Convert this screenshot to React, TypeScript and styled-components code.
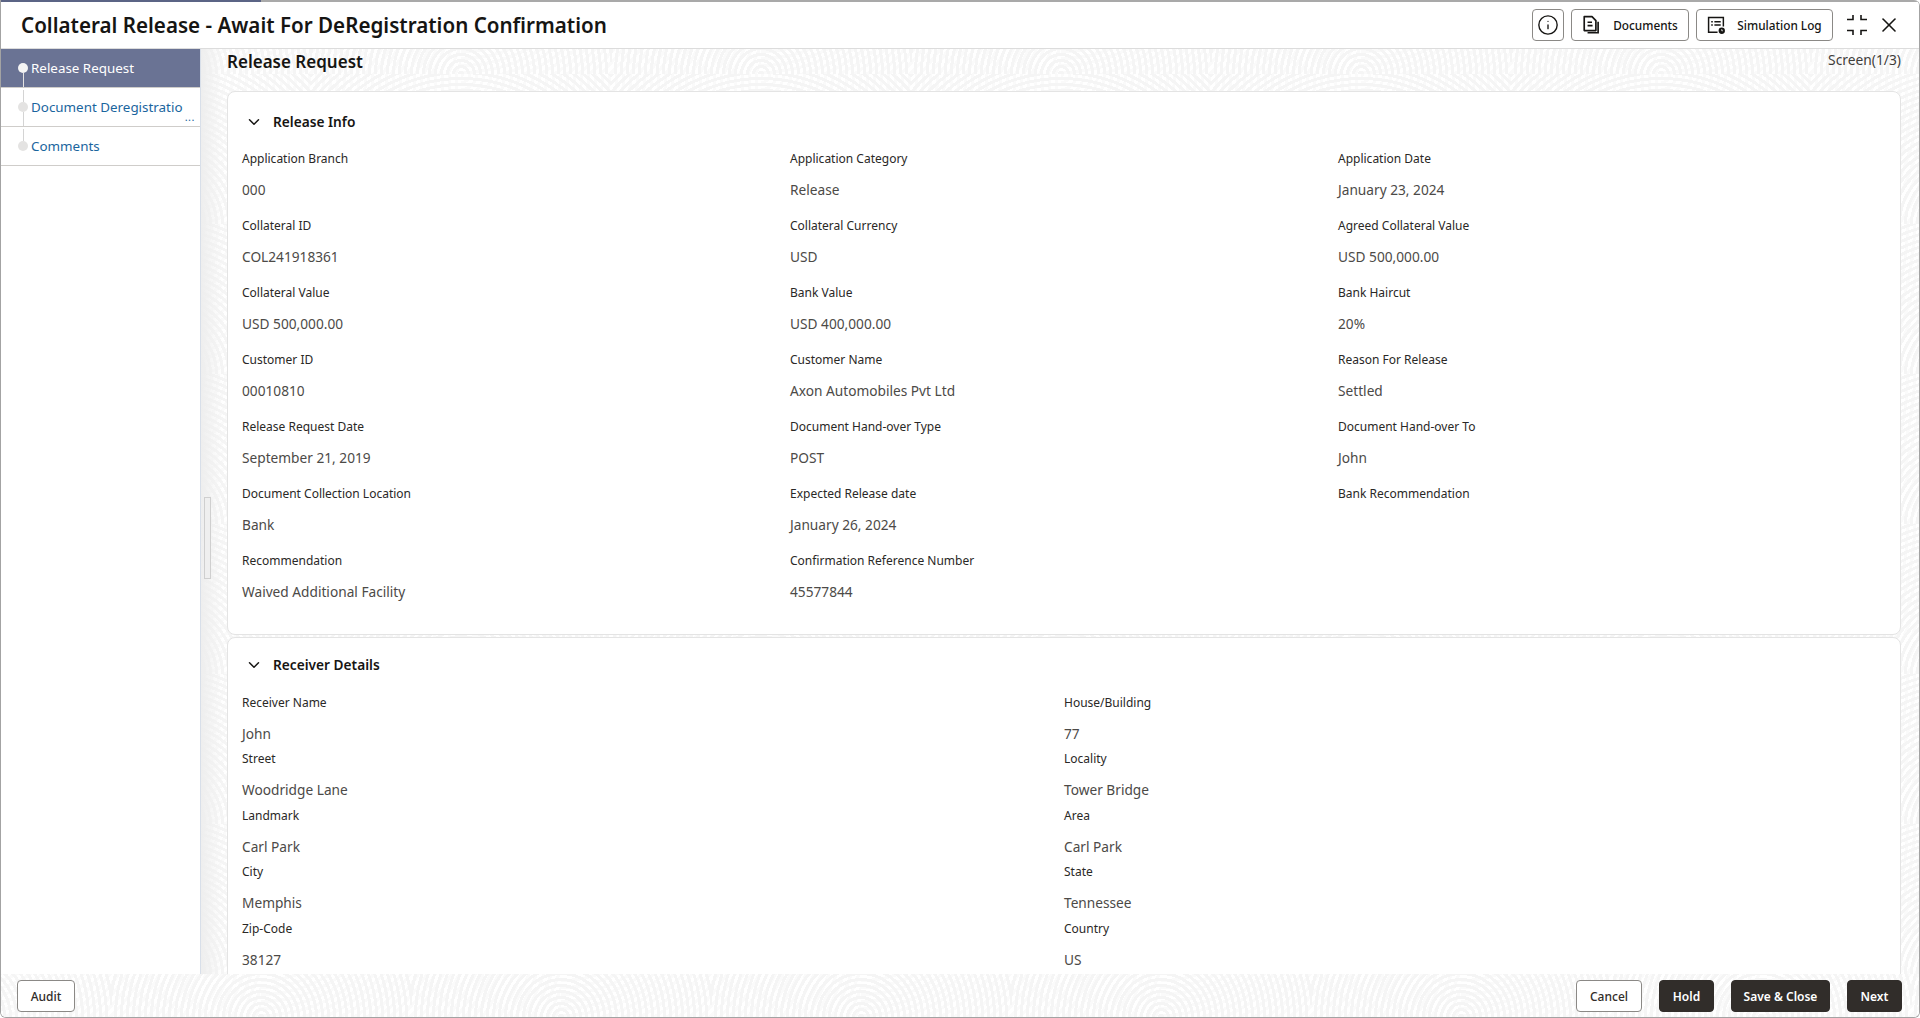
import React from 'react';
import styled, { createGlobalStyle, css } from 'styled-components';
import { Info, X, ChevronDown } from 'lucide-react';

const GlobalStyle = createGlobalStyle`
  html, body { margin: 0; padding: 0; height: 100%; background: #fff; }
  #root { height: 100%; }
  * { box-sizing: border-box; }
  body { font-family: "Noto Sans", "Open Sans", sans-serif; color: #161513; overflow: hidden; }
`;

// concentric arc texture shared by the page body and the footer
const arcs = css`
  background-color: #fff;
  background-image:
    repeating-radial-gradient(circle at 50% 100%, #f5f5f5 0 3px, transparent 3px 6px),
    repeating-radial-gradient(circle at 0% 0%, #fafafa 0 3px, transparent 3px 7px);
  background-size: 300px 150px, 300px 150px;
  background-position: left 110px bottom 0, left 260px bottom 0;
`;

const Window = styled.div`
  height: 1018px;
  width: 1920px;
  display: flex;
  flex-direction: column;
  border: 1px solid #a3a3a3;
  border-top: 0;
  border-radius: 0 6px 6px 6px;
  overflow: hidden;
`;

const ProgressTrack = styled.div`
  height: 2px;
  flex: none;
  background: #a9a9a9;
`;

const ProgressFill = styled.div`
  height: 100%;
  background: #5b6485;
`;

const Header = styled.header`
  height: 47px;
  flex: none;
  display: flex;
  align-items: center;
  padding: 0 18px 0 20px;
  background: #fff;
  border-bottom: 1px solid #dcdcdc;
`;

const Title = styled.h1`
  margin: 0;
  flex: 1;
  font-size: 20.6px;
  font-weight: 600;
  color: #161513;
`;

const ToolButton = styled.button<{ $width: number }>`
  width: ${p => p.$width}px;
  height: 32px;
  margin-right: 7px;
  display: flex;
  align-items: center;
  justify-content: center;
  gap: 11px;
  background: #fff;
  border: 1px solid #8b8986;
  border-radius: 4px;
  font-family: inherit;
  font-size: 11.8px;
  font-weight: 500;
  color: #161513;
  padding: 0;
`;

const WindowIcons = styled.div`
  display: flex;
  align-items: center;
  gap: 10px;
  margin-left: 7px;
  color: #161513;
`;

const Body = styled.div`
  flex: 1;
  min-height: 0;
  display: flex;
`;

const Sidebar = styled.nav`
  width: 200px;
  flex: none;
  background: #fff;
  border-right: 1px solid #d8dfe9;
`;

const NavItem = styled.div<{ $active?: boolean }>`
  position: relative;
  height: 39px;
  display: flex;
  align-items: center;
  padding-left: 30px;
  font-size: 13.4px;
  background: ${p => (p.$active ? '#6a7394' : '#fff')};
  color: ${p => (p.$active ? '#fff' : '#1a659e')};
  border-bottom: 1px solid #cfcdca;
`;

const NavDot = styled.span<{ $active?: boolean }>`
  position: absolute;
  left: 17px;
  top: 14px;
  width: 10px;
  height: 10px;
  border-radius: 50%;
  background: ${p => (p.$active ? '#f4f4f4' : '#e4e3e2')};
`;

const NavLine = styled.span<{ $top: number; $height: number; $light?: boolean }>`
  position: absolute;
  left: 21.5px;
  top: ${p => p.$top}px;
  width: 1px;
  height: ${p => p.$height}px;
  background: ${p => (p.$light ? '#e4e3e2' : '#d4d4d4')};
`;

const NavMore = styled.span`
  position: absolute;
  right: 5px;
  bottom: 3px;
  font-size: 11px;
  line-height: 12px;
  letter-spacing: 0.5px;
  color: #1a659e;
`;

const Content = styled.main`
  ${arcs}
  position: relative;
  flex: 1;
  min-width: 0;
  overflow: hidden;
  padding: 0 18px 0 26px;

  &::before {
    content: '';
    position: absolute;
    top: 0;
    bottom: 0;
    left: 0;
    width: 22px;
    background: linear-gradient(to right, #eeeeee, rgba(245, 245, 245, 0));
  }
`;

const Handle = styled.div`
  position: absolute;
  left: 3px;
  top: 448px;
  width: 7px;
  height: 82px;
  background: #efefef;
  border: 1px solid #cfcfcf;
`;

const PageHead = styled.div`
  height: 42px;
  position: relative;
  display: flex;
  justify-content: space-between;
  align-items: flex-start;
`;

const PageTitle = styled.h2`
  margin: 1px 0 0;
  font-size: 17px;
  line-height: 24px;
  font-weight: 600;
  color: #161513;
`;

const ScreenCount = styled.span`
  margin-top: -1px;
  font-size: 13.8px;
  line-height: 24px;
  color: #3f3d3a;
`;

const Card = styled.section`
  position: relative;
  background: #fff;
  border: 1px solid #e4e4e4;
  border-radius: 8px;
  padding: 0 14px;
  margin-bottom: 2px;
`;

const CardHead = styled.div<{ $height: number; $lift: number }>`
  height: ${p => p.$height}px;
  display: flex;
  align-items: center;
  gap: 10px;
  padding: 0 0 ${p => p.$lift}px 3px;
  font-size: 13.7px;
  font-weight: 600;
  color: #161513;
`;

const FieldGrid = styled.div<{ $cols: number; $pad: number }>`
  display: grid;
  grid-template-columns: repeat(${p => p.$cols}, 1fr);
  padding-bottom: ${p => p.$pad}px;
`;

const Field = styled.div<{ $height: number }>`
  height: ${p => p.$height}px;
`;

const Label = styled.div<{ $gap: number }>`
  font-size: 12px;
  line-height: 16px;
  font-weight: 400;
  color: #2a2826;
  margin-bottom: ${p => p.$gap}px;
`;

const Value = styled.div`
  font-size: 13.7px;
  line-height: 24px;
  color: #4c4a47;
`;

const Footer = styled.footer`
  ${arcs}
  height: 43px;
  flex: none;
  display: flex;
  align-items: flex-start;
  justify-content: space-between;
  padding: 6px 17px 0 16px;
  border-top: 0;
`;

const ButtonGroup = styled.div`
  display: flex;
  gap: 17px;
`;

const ActionButton = styled.button<{ $width: number; $dark?: boolean }>`
  width: ${p => p.$width}px;
  height: 32px;
  padding: 0;
  border-radius: 4px;
  font-family: inherit;
  font-size: 12px;
  font-weight: ${p => (p.$dark ? 600 : 500)};
  background: ${p => (p.$dark ? '#312d2a' : '#fff')};
  color: ${p => (p.$dark ? '#fff' : '#312d2a')};
  border: 1px solid ${p => (p.$dark ? '#312d2a' : '#8b8986')};
`;

function DocumentsIcon() {
  return (
    <svg width="20" height="20" viewBox="0 0 18 18" fill="none" stroke="#161513" strokeWidth="1.5">
      <path d="M2 1.5h7l3.5 3.5v9H2z" strokeLinejoin="round" />
      <path d="M5 6.5h4M5 9.5h4.5" />
      <path d="M14.5 6v10H5" />
    </svg>
  );
}

function SimLogIcon() {
  return (
    <svg width="19" height="19" viewBox="0 0 18 18" fill="none" stroke="#161513" strokeWidth="1.4">
      <path d="M10 15.5H1.5v-14h14V10" />
      <path d="M4 5.5h1.5M7 5.5h6M4 8.5h1.5M7 8.5h6" />
      <circle cx="14" cy="14" r="3" fill="#161513" stroke="none" />
      <path d="M14 12.5v1.5h1" stroke="#fff" strokeWidth="0.8" />
    </svg>
  );
}

function CollapseIcon() {
  return (
    <svg width="20" height="20" viewBox="0 0 20 20" fill="none" stroke="#161513" strokeWidth="1.6">
      <path d="M0 4.5h6V0M14 0v4.5h6M0 15.5h6V20M14 20v-4.5h6" />
    </svg>
  );
}

const releaseInfo: [string, string][] = [
  ['Application Branch', '000'],
  ['Application Category', 'Release'],
  ['Application Date', 'January 23, 2024'],
  ['Collateral ID', 'COL241918361'],
  ['Collateral Currency', 'USD'],
  ['Agreed Collateral Value', 'USD 500,000.00'],
  ['Collateral Value', 'USD 500,000.00'],
  ['Bank Value', 'USD 400,000.00'],
  ['Bank Haircut', '20%'],
  ['Customer ID', '00010810'],
  ['Customer Name', 'Axon Automobiles Pvt Ltd'],
  ['Reason For Release', 'Settled'],
  ['Release Request Date', 'September 21, 2019'],
  ['Document Hand-over Type', 'POST'],
  ['Document Hand-over To', 'John'],
  ['Document Collection Location', 'Bank'],
  ['Expected Release date', 'January 26, 2024'],
  ['Bank Recommendation', ''],
  ['Recommendation', 'Waived Additional Facility'],
  ['Confirmation Reference Number', '45577844'],
];

const receiverDetails: [string, string][] = [
  ['Receiver Name', 'John'],
  ['House/Building', '77'],
  ['Street', 'Woodridge Lane'],
  ['Locality', 'Tower Bridge'],
  ['Landmark', 'Carl Park'],
  ['Area', 'Carl Park'],
  ['City', 'Memphis'],
  ['State', 'Tennessee'],
  ['Zip-Code', '38127'],
  ['Country', 'US'],
];

export default function App() {
  return (
    <>
      <GlobalStyle />
      <Window>
        <ProgressTrack>
          <ProgressFill style={{ width: 260 }} />
        </ProgressTrack>
        <Header>
          <Title>Collateral Release - Await For DeRegistration Confirmation</Title>
          <ToolButton $width={32}>
            <Info size={22} strokeWidth={1.5} />
          </ToolButton>
          <ToolButton $width={118}>
            <DocumentsIcon />
            Documents
          </ToolButton>
          <ToolButton $width={137}>
            <SimLogIcon />
            Simulation Log
          </ToolButton>
          <WindowIcons>
            <CollapseIcon />
            <X size={24} strokeWidth={1.6} />
          </WindowIcons>
        </Header>
        <Body>
          <Sidebar>
            <NavItem $active>
              <NavDot $active />
              <NavLine $top={24} $height={14} $light />
              Release Request
            </NavItem>
            <NavItem>
              <NavLine $top={2} $height={12} />
              <NavDot />
              <NavLine $top={24} $height={14} />
              Document Deregistratio
              <NavMore>...</NavMore>
            </NavItem>
            <NavItem>
              <NavLine $top={2} $height={12} />
              <NavDot />
              Comments
            </NavItem>
          </Sidebar>
          <Content>
            <Handle />
            <PageHead>
              <PageTitle>Release Request</PageTitle>
              <ScreenCount>Screen(1/3)</ScreenCount>
            </PageHead>
            <Card>
              <CardHead $height={59} $lift={0}>
                <ChevronDown size={18} strokeWidth={2} />
                Release Info
              </CardHead>
              <FieldGrid $cols={3} $pad={14}>
                {releaseInfo.map(([label, value]) => (
                  <Field key={label} $height={67}>
                    <Label $gap={11}>{label}</Label>
                    {value && <Value>{value}</Value>}
                  </Field>
                ))}
              </FieldGrid>
            </Card>
            <Card>
              <CardHead $height={57} $lift={4}>
                <ChevronDown size={18} strokeWidth={2} />
                Receiver Details
              </CardHead>
              <FieldGrid $cols={2} $pad={40}>
                {receiverDetails.map(([label, value]) => (
                  <Field key={label} $height={56.4}>
                    <Label $gap={11}>{label}</Label>
                    <Value>{value}</Value>
                  </Field>
                ))}
              </FieldGrid>
            </Card>
          </Content>
        </Body>
        <Footer>
          <ActionButton $width={58}>Audit</ActionButton>
          <ButtonGroup>
            <ActionButton $width={66}>Cancel</ActionButton>
            <ActionButton $width={55} $dark>Hold</ActionButton>
            <ActionButton $width={99} $dark>Save &amp; Close</ActionButton>
            <ActionButton $width={55} $dark>Next</ActionButton>
          </ButtonGroup>
        </Footer>
      </Window>
    </>
  );
}
